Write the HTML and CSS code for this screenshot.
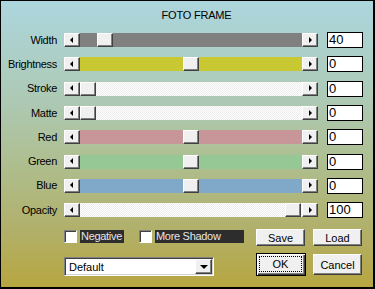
FILE: index.html
```html
<!DOCTYPE html>
<html lang="en">
<head>
  <meta charset="UTF-8" />
  <title>Foto Frame</title>
  <link rel="stylesheet" href="styles.css">
</head>
<body>

  <div class="dialog">
    <div class="title">FOTO FRAME</div>

    <div class="sliders">
      <div class="name">Width</div>
      <div class="slider gray">
        <span class="arrow left"></span>
        <div class="track"><span class="thumb" style="left: 17px"></span></div>
        <span class="arrow right"></span>
      </div>
      <div class="value">40</div>

      <div class="name">Brightness</div>
      <div class="slider yellow">
        <span class="arrow left"></span>
        <div class="track"><span class="thumb" style="left: 103px"></span></div>
        <span class="arrow right"></span>
      </div>
      <div class="value">0</div>

      <div class="name">Stroke</div>
      <div class="slider dither">
        <span class="arrow left"></span>
        <div class="track"><span class="thumb" style="left: 0px"></span></div>
        <span class="arrow right"></span>
      </div>
      <div class="value">0</div>

      <div class="name">Matte</div>
      <div class="slider dither">
        <span class="arrow left"></span>
        <div class="track"><span class="thumb" style="left: 0px"></span></div>
        <span class="arrow right"></span>
      </div>
      <div class="value">0</div>

      <div class="name">Red</div>
      <div class="slider red">
        <span class="arrow left"></span>
        <div class="track"><span class="thumb" style="left: 103px"></span></div>
        <span class="arrow right"></span>
      </div>
      <div class="value">0</div>

      <div class="name">Green</div>
      <div class="slider green">
        <span class="arrow left"></span>
        <div class="track"><span class="thumb" style="left: 103px"></span></div>
        <span class="arrow right"></span>
      </div>
      <div class="value">0</div>

      <div class="name">Blue</div>
      <div class="slider blue">
        <span class="arrow left"></span>
        <div class="track"><span class="thumb" style="left: 103px"></span></div>
        <span class="arrow right"></span>
      </div>
      <div class="value">0</div>

      <div class="name">Opacity</div>
      <div class="slider dither">
        <span class="arrow left"></span>
        <div class="track"><span class="thumb" style="left: 205px"></span></div>
        <span class="arrow right"></span>
      </div>
      <div class="value">100</div>
    </div>

    <div class="bottom">
      <div class="checks">
        <span class="check"></span>
        <span class="check-label">Negative</span>
        <span class="check second"></span>
        <span class="check-label wide">More Shadow</span>
      </div>
      <button class="btn">Save</button>
      <button class="btn">Load</button>

      <div class="select">
        <span class="select-text">Default</span>
        <span class="select-btn"></span>
      </div>
      <button class="btn default"><span class="focus">OK</span></button>
      <button class="btn cancel">Cancel</button>
    </div>
  </div>

</body>
</html>
```

FILE: styles.css
```css
body {
  margin: 0;
  padding: 0;
  font-family: "Liberation Sans", Arial, sans-serif;
  font-size: 11px;
  color: #000;
}

.dialog {
  width: 375px;
  height: 289px;
  box-sizing: border-box;
  overflow: hidden;
  border-style: solid;
  border-color: #000;
  border-width: 1px 2px 2px 1px;
  padding-top: 8px;
  background: linear-gradient(to bottom, #acd6de 0%, #adc9b4 35%, #aebf92 55%, #b1b06a 80%, #b7a640 100%);
}

.title {
  height: 13px;
  line-height: 13px;
  text-align: center;
  padding-left: 19px;
  letter-spacing: -0.2px;
}

/* Lignes des curseurs */
.sliders {
  display: grid;
  grid-template-columns: 56px 254px 36px;
  grid-template-rows: repeat(8, 24.3px);
  column-gap: 7px;
  align-items: center;
  margin-top: 6px;
}

.name {
  text-align: right;
  line-height: 13px;
  letter-spacing: -0.3px;
}

.slider {
  display: flex;
  height: 14px;
}

.arrow,
.thumb,
.btn,
.select-btn {
  box-sizing: border-box;
  background: #f0f0f0;
  border: 1px solid;
  border-color: #fff #404040 #404040 #fff;
  box-shadow: inset -1px -1px #808080;
}

.arrow {
  width: 16px;
  height: 14px;
  display: flex;
  align-items: center;
  justify-content: center;
}

.arrow::before {
  content: "";
  width: 0;
  height: 0;
  border-top: 3px solid transparent;
  border-bottom: 3px solid transparent;
  margin-top: -1px;
}

.arrow.left::before {
  border-right: 3px solid #000;
  margin-left: -2px;
}

.arrow.right::before {
  border-left: 3px solid #000;
  margin-left: 0;
}

.track {
  flex: 1;
  position: relative;
}

.thumb {
  position: absolute;
  top: 0;
  width: 16px;
  height: 14px;
}

.gray .track { background: #808080; }
.yellow .track { background: #c8c832; }
.red .track { background: #c89698; }
.green .track { background: #96c896; }
.blue .track { background: #80a8c8; }
.dither .track {
  background: repeating-conic-gradient(#fff 0 25%, #ececec 0 50%) 0 0 / 2px 2px;
}

.value {
  box-sizing: border-box;
  width: 36px;
  height: 16px;
  margin-left: 2px;
  background: #fff;
  border: 1px solid #000;
  font-size: 13px;
  line-height: 14px;
  padding-left: 1px;
}

/* Parte de baixo */
.bottom {
  display: grid;
  grid-template-columns: 184px 49px 49px;
  grid-template-rows: 18px 23px;
  column-gap: 8px;
  row-gap: 6px;
  margin-top: 7px;
  padding-left: 63px;
}

.checks {
  display: flex;
  align-items: center;
  align-self: start;
  margin-top: 1px;
  height: 13px;
}

.check {
  box-sizing: border-box;
  width: 13px;
  height: 13px;
  background: #fff;
  border: 1px solid;
  border-color: #808080 #fff #fff #808080;
  box-shadow: inset 1px 1px #404040;
}

.check.second {
  margin-left: 15px;
}

.check-label {
  margin-left: 3px;
  height: 13px;
  line-height: 13px;
  padding: 0 1px;
  width: 44px;
  box-sizing: border-box;
  background: #2d2d2d;
  color: #e6e6e6;
  white-space: nowrap;
  letter-spacing: -0.3px;
}

.check-label.wide {
  width: 89px;
}

.btn {
  font-family: "Liberation Sans", Arial, sans-serif;
  font-size: 11px;
  color: #000;
  padding: 0;
  width: 49px;
  height: 17px;
  align-self: start;
  cursor: pointer;
}

.btn.default {
  width: 50px;
  height: 23px;
  border: 1px solid #000;
  box-shadow: inset 1px 1px #fff, inset -1px -1px #404040, inset -2px -2px #808080;
  padding: 3px 4px 4px 3px;
  display: flex;
}

.focus {
  flex: 1;
  outline: 1px dotted #000;
  display: flex;
  align-items: center;
  justify-content: center;
}

.btn.cancel {
  height: 21px;
  align-self: center;
}

.select {
  box-sizing: border-box;
  width: 150px;
  height: 19px;
  align-self: end;
  display: flex;
  align-items: center;
  background: #fff;
  border: 1px solid;
  border-color: #808080 #fff #fff #808080;
  box-shadow: inset 1px 1px #404040, inset -1px -1px #d4d4d4;
  padding: 1px 1px 1px 4px;
}

.select-text {
  flex: 1;
}

.select-btn {
  width: 17px;
  height: 15px;
  display: flex;
  align-items: center;
  justify-content: center;
}

.select-btn::before {
  content: "";
  border-left: 4px solid transparent;
  border-right: 4px solid transparent;
  border-top: 4px solid #000;
}
```
